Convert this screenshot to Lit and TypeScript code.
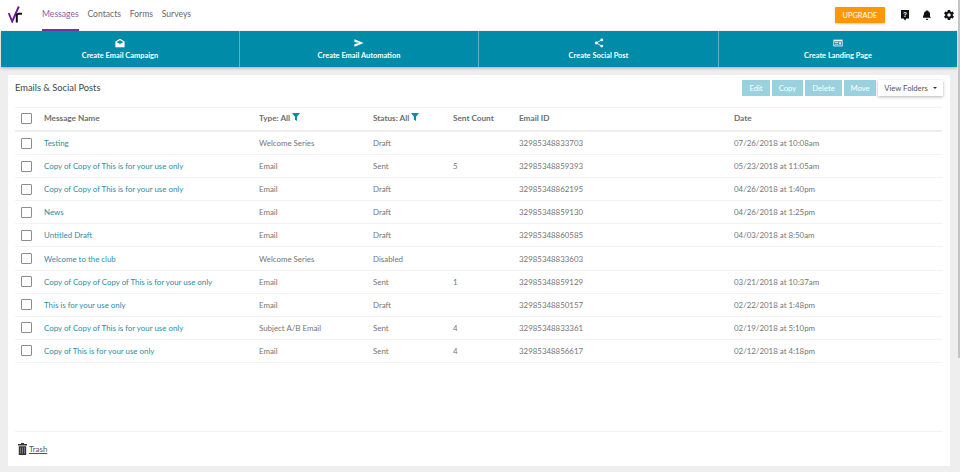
import { LitElement, html, css, svg } from "lit";
import { customElement } from "lit/decorators.js";

const rows = [
  ["Testing", "Welcome Series", "Draft", "", "32985348833703", "07/26/2018 at 10:08am"],
  ["Copy of Copy of This is for your use only", "Email", "Sent", "5", "32985348859393", "05/23/2018 at 11:05am"],
  ["Copy of Copy of This is for your use only", "Email", "Draft", "", "32985348862195", "04/26/2018 at 1:40pm"],
  ["News", "Email", "Draft", "", "32985348859130", "04/26/2018 at 1:25pm"],
  ["Untitled Draft", "Email", "Draft", "", "32985348860585", "04/03/2018 at 8:50am"],
  ["Welcome to the club", "Welcome Series", "Disabled", "", "32985348833603", ""],
  ["Copy of Copy of Copy of This is for your use only", "Email", "Sent", "1", "32985348859129", "03/21/2018 at 10:37am"],
  ["This is for your use only", "Email", "Draft", "", "32985348850157", "02/22/2018 at 1:48pm"],
  ["Copy of Copy of This is for your use only", "Subject A/B Email", "Sent", "4", "32985348833361", "02/19/2018 at 5:10pm"],
  ["Copy of This is for your use only", "Email", "Sent", "4", "32985348856617", "02/12/2018 at 4:18pm"],
];

const filter = svg`<svg class="filter" viewBox="0 0 10 10" width="8" height="8"><path d="M0 0h10L6.300 4.600V10L3.700 8.400V4.600z" fill="#0a8ea8"/></svg>`;

@customElement("app-root")
export class AppRoot extends LitElement {
  static styles = css`
    :host { display: block; position: relative; width: 960px; height: 472px; overflow: hidden; background: #eeeeee;
      font-family: "Lato", "Noto Sans", sans-serif; font-size: 7.9px; color: #757575; }
    .thumb { position: absolute; right: 0; top: 0; width: 2px; height: 358px; background: #c4c4c4; }
    .top { height: 31px; background: #fff; display: flex; align-items: stretch; }
    .logo { width: 42px; display: flex; padding: 6px 0 0 8px; box-sizing: border-box; }
    .nav { display: flex; gap: 8.700px; }
    .nav a { font-size: 8.600px; color: #6a6a6a; padding-top: 9px; height: 22px; }
    .nav a.on { color: #8a5fa8; border-bottom: 2px solid #7b2fa5; height: 20px; }
    .right { margin-left: auto; display: flex; align-items: center; padding: 0 5px 1px 0; }
    .upgrade { width: 50px; height: 16px; background: #ff9800; color: #fff; font-size: 7.400px; display: flex;
      align-items: center; justify-content: center; border-radius: 1px; box-shadow: 0 1px 2px rgba(0,0,0,.2); margin-right: 14px; }
    .ic { width: 12px; height: 12px; display: block; }
    .icons { display: flex; gap: 10px; }
    .bar { background: #fff; padding: 0 3px 0 1px; }
    .actions { height: 36px; display: grid; grid-template-columns: 238px 239px 240px 1fr; background: #008ba8;
      box-shadow: 0 1px 3px rgba(0,0,0,.3); }
    .act { display: flex; flex-direction: column; align-items: center; color: #fff; font-size: 7.450px; font-weight: 700;
      padding-top: 7px; box-sizing: border-box; border-left: 1px solid #5fb3c5; gap: 3px; }
    .act:first-child { border-left: 0; }
    .act svg { width: 10px; height: 10px; display: block; }
    .card { margin: 8px 10px 0 8px; height: 391px; background: #fff; padding: 0 8px 0 7px; display: flex; flex-direction: column; box-sizing: border-box; }
    .head { height: 32px; display: flex; align-items: flex-start; }
    .title { font-size: 9.300px; color: #444; padding-top: 7px; }
    .btns { margin-left: auto; margin-right: -1px; display: grid; grid-template-columns: 28px 31px 37px 32px 65px; gap: 2px; padding-top: 5px; }
    .btn { height: 16px; background: #99d1de; color: #fff; font-size: 7.700px; display: flex; align-items: center; justify-content: center; }
    .folders { background: #fff; color: #555; box-shadow: 0 1px 3px rgba(0,0,0,.3); gap: 5px; }
    .caret { width: 0; height: 0; border: 2px solid transparent; border-top: 2.500px solid #333; border-bottom: 0; }
    .row { display: grid; grid-template-columns: 29px 215px 114px 80px 66px 215px 1fr; align-items: center;
      height: 23.100px; border-bottom: 1px solid #f3f3f3; box-sizing: border-box; }
    .row.hd { border-top: 1px solid #f3f3f3; border-bottom: 2px solid #eeeeee; color: #6e6e6e; font-weight: 700;
      font-size: 8.200px; height: 25px; padding-bottom: 2px; }
    .cb { width: 11px; height: 11px; box-sizing: border-box; border: 1px solid #8d8d8d; border-radius: 1px; margin-left: 5.500px; background: #fff; }
    .name { color: #2b8ea6; }
    .hc { display: flex; align-items: center; gap: 2px; }
    .filter { position: relative; top: -1px; }
    .spacer { flex: 1; }
    .foot { height: 33px; border-top: 1px solid #f3f3f3; display: flex; align-items: center; gap: 2px; padding-left: 3px; margin-bottom: 1px; }
    .foot span { text-decoration: underline; color: #555; }
    .foot svg { width: 9px; height: 12px; }
  `;

  render() {
    return html`
      <div class="top">
        <div class="logo">
          <svg width="16" height="17" viewBox="0 0 16 17">
            <path d="M0.700 7 L4.200 15.500 L10.800 0.500" fill="none" stroke="#6a1b9a" stroke-width="1.900"/>
            <path d="M8.800 16.500V9.500q0-1.800 2-1.800h3.200" fill="none" stroke="#111" stroke-width="2"/>
          </svg>
        </div>
        <div class="nav">
          <a class="on">Messages</a><a>Contacts</a><a>Forms</a><a>Surveys</a>
        </div>
        <div class="right">
          <div class="upgrade">UPGRADE</div>
          <div class="icons">
            <svg class="ic" viewBox="0 0 12 12"><path d="M2 1h8v8.500H7.500L6 11.500 4.500 9.500H2z" fill="#111"/><text x="6" y="7.600" text-anchor="middle" font-size="6.500" font-weight="700" fill="#fff" font-family="Liberation Sans">?</text></svg>
            <svg class="ic" viewBox="0 0 12 12"><path d="M6 1.200c.5 0 .8.3.8.8 1.500.4 2.200 1.600 2.200 3v2.500l1 1.300H2V7.500L3 5c0-1.400.7-2.600 2.200-3 0-.5.3-.8.8-.8zM4.800 9.800h2.400a1.200 1.200 0 0 1-2.400 0z" fill="#111"/></svg>
            <svg class="ic" viewBox="0 0 24 24"><path fill="#111" d="M19.430 12.980c.04-.32.070-.64.070-.98s-.03-.66-.07-.98l2.110-1.650c.19-.15.240-.42.120-.64l-2-3.460c-.12-.22-.39-.3-.61-.22l-2.490 1c-.52-.4-1.080-.73-1.690-.98l-.38-2.650A.49.49 0 0 0 14 2h-4c-.25 0-.46.18-.49.420l-.38 2.650c-.61.25-1.170.59-1.690.98l-2.490-1c-.23-.09-.49 0-.61.220l-2 3.460c-.13.220-.07.490.120.640l2.110 1.650c-.04.320-.07.650-.07.980s.03.660.07.980l-2.110 1.650c-.19.150-.24.420-.12.640l2 3.460c.12.220.39.300.61.220l2.490-1c.52.400 1.080.730 1.690.980l.38 2.650c.03.240.240.420.490.420h4c.25 0 .46-.18.490-.42l.38-2.650c.61-.25 1.170-.59 1.690-.98l2.490 1c.23.090.49 0 .61-.22l2-3.460c.12-.22.07-.49-.12-.64zM12 15.500a3.500 3.500 0 1 1 0-7 3.500 3.500 0 0 1 0 7z"/></svg>
          </div>
        </div>
      </div>
      <div class="bar"><div class="actions">
        <div class="act"><svg viewBox="0 0 12 12"><path d="M6 1 L11.500 4.300V11H.5V4.300z" fill="#fff"/><path d="M2 4.800 6 2.800l4 2L6 7.300z" fill="#008ba8"/></svg>Create Email Campaign</div>
        <div class="act"><svg viewBox="0 0 12 12"><path d="M.5 1.500 11.500 6 .5 10.500V7.300L7 6 .5 4.700z" fill="#fff"/></svg>Create Email Automation</div>
        <div class="act"><svg viewBox="0 0 12 12"><circle cx="9.300" cy="2.300" r="1.700" fill="#fff"/><circle cx="9.300" cy="9.700" r="1.700" fill="#fff"/><circle cx="2.700" cy="6" r="1.700" fill="#fff"/><path d="M9.300 2.300 2.700 6l6.600 3.700" fill="none" stroke="#fff" stroke-width="1"/></svg>Create Social Post</div>
        <div class="act"><svg viewBox="0 0 12 12"><path d="M.5 2h11v8H.5z" fill="#fff"/><path d="M1.500 4h9v5h-9z" fill="#008ba8"/><path d="M2.500 5.200h4v.8h-4zM2.500 7h4v.8h-4zM7.500 5.200h2v2.600h-2z" fill="#fff"/></svg>Create Landing Page</div>
      </div></div>
      <div class="card">
        <div class="head">
          <div class="title">Emails &amp; Social Posts</div>
          <div class="btns">
            <div class="btn">Edit</div><div class="btn">Copy</div><div class="btn">Delete</div><div class="btn">Move</div>
            <div class="btn folders">View Folders <i class="caret"></i></div>
          </div>
        </div>
        <div class="row hd">
          <div class="cb"></div><div>Message Name</div>
          <div class="hc">Type: All ${filter}</div>
          <div class="hc">Status: All ${filter}</div>
          <div>Sent Count</div><div>Email ID</div><div>Date</div>
        </div>
        ${rows.map((r) => html`<div class="row">
          <div class="cb"></div><div class="name">${r[0]}</div><div>${r[1]}</div><div>${r[2]}</div><div>${r[3]}</div><div>${r[4]}</div><div>${r[5]}</div>
        </div>`)}
        <div class="spacer"></div>
        <div class="foot">
          <svg viewBox="0 0 9 12"><path d="M3 0h3v1h3v1.500H0V1h3zM.8 3.200h7.400V12H.8z" fill="#333"/><path d="M2.500 4.500v6M4.500 4.500v6M6.500 4.500v6" stroke="#999" stroke-width=".7"/></svg>
          <span>Trash</span>
        </div>
      </div>
      <div class="thumb"></div>
    `;
  }
}
